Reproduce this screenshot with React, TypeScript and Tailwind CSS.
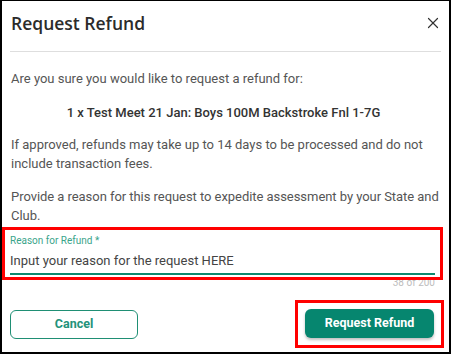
import { X } from 'lucide-react'

export default function App() {
  return (
    <div className="w-[451px] h-[354px] bg-white border-t border-l-2 border-r-2 border-b-2 border-black flex flex-col font-['Roboto',sans-serif] overflow-hidden">
      {/* Header */}
      <div className="h-[50px] flex items-start justify-between pl-[9px] pr-[7px] pt-[10px]">
        <h1 className="text-[17.5px] leading-[24px] font-semibold text-[#2b2b2b] font-['Open_Sans',sans-serif]">
          Request Refund
        </h1>
        <button type="button" title="Close" className="mt-[3px] text-[#333]">
          <X size={18} strokeWidth={1.6} />
        </button>
      </div>
      <div className="mx-[8px] h-px bg-[#dedede]" />

      {/* Body */}
      <div className="pl-[9px] pr-[2px] text-[13px] text-[#555]">
        <p className="mt-[17px] leading-[20px]">Are you sure you would like to request a refund for:</p>
        <p className="mt-[14px] leading-[20px] text-center font-medium text-[#333] pr-[11px]">
          1 x Test Meet 21 Jan: Boys 100M Backstroke Fnl 1-7G
        </p>
        <p className="mt-[12px] leading-[19px]">
          If approved, refunds may take up to 14 days to be processed and do not include transaction fees.
        </p>
        <p className="mt-[14px] leading-[19px] tracking-[-0.05px]">
          Provide a reason for this request to expedite assessment by your State and Club.
        </p>
      </div>

      {/* Reason field */}
      <div className="relative z-10 mt-[2px] mr-[6px] border-[3px] border-[#ff0000] pl-[5px] pr-[5px] pt-[5px] pb-[2px]">
        <div className="text-[10px] leading-[12px] text-[#3aa48a]">Reason for Refund *</div>
        <div className="mt-[4px] text-[13px] leading-[20px] text-[#444]">Input your reason for the request HERE</div>
        <div className="mt-[2px] h-[2px] bg-[#0b8a6f]" />
      </div>
      <div className="relative z-0 -mt-[3px] pr-[14px] text-right text-[10px] leading-[12px] text-[#bdbdbd]">38 of 200</div>

      {/* Actions */}
      <div className="mt-[11px] pl-[8px] pr-[5px] flex items-center justify-between">
        <button
          type="button"
          className="w-[128px] h-[29px] rounded-[6px] border border-[#1f8f74] text-[12.5px] font-bold text-[#23927a]"
        >
          Cancel
        </button>
        <div className="border-[3px] border-[#ff0000] px-[7px] pt-[6px] pb-[7px]">
          <button
            type="button"
            className="w-[129px] h-[29px] rounded-[6px] bg-[#06866f] text-[12.5px] font-bold text-white shadow-[0_2px_3px_rgba(0,0,0,0.25)]"
          >
            Request Refund
          </button>
        </div>
      </div>
    </div>
  )
}
